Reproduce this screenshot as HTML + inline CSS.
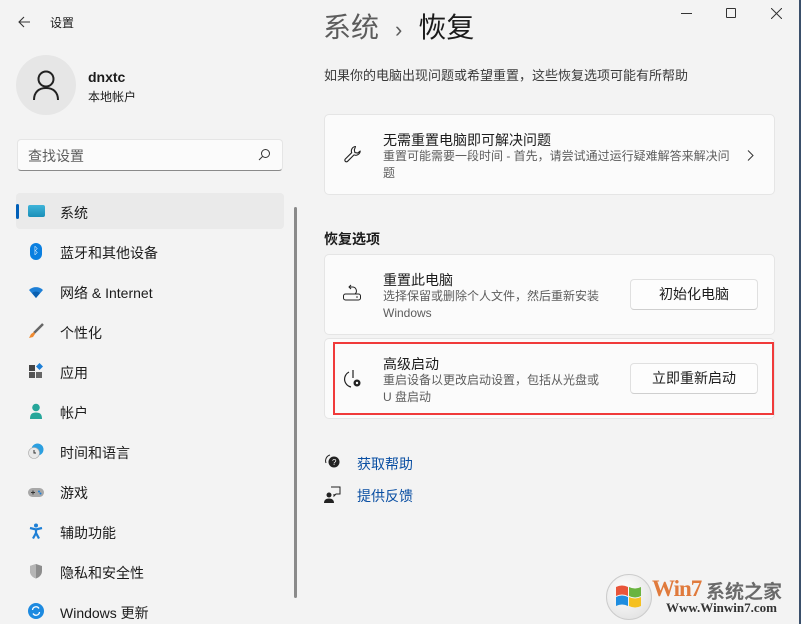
<!DOCTYPE html>
<html><head><meta charset="utf-8">
<style>
*{margin:0;padding:0;box-sizing:border-box}
body{width:801px;height:624px;overflow:hidden;background:#f3f3f3;font-family:"Liberation Sans","Noto Sans CJK SC",sans-serif;color:#1b1b1b;position:relative}
.a{position:absolute;white-space:nowrap}
.card{position:absolute;left:324px;width:451px;background:#fbfbfb;border:1px solid #e5e5e5;border-radius:5px}
.btn{position:absolute;left:630px;width:128px;height:31px;background:#fdfdfd;border:1px solid #e0e0e0;border-bottom-color:#cfcfcf;border-radius:4px;font-size:14px;text-align:center;line-height:29px}
.nav{position:absolute;left:60px;font-size:14px}
.ico{position:absolute;left:28px;width:16px;height:16px}
.t14{font-size:14px}
.t12{font-size:12px;color:#5d5d5d;line-height:17px}
</style></head><body>
<svg class="a" style="left:17px;top:15px" width="14" height="14" viewBox="0 0 14 14"><path d="M13 7H2M7 2L2 7l5 5" stroke="#333" stroke-width="1.1" fill="none"/></svg>
<div class="a" style="left:50px;top:14px;font-size:12px">设置</div>
<div class="a" style="left:16px;top:55px;width:60px;height:60px;border-radius:50%;background:#e6e6e6"></div>
<svg class="a" style="left:32px;top:69px" width="28" height="32" viewBox="0 0 28 32"><circle cx="14" cy="10" r="7.5" stroke="#222" stroke-width="2" fill="none"/><path d="M2 31c0-8 5-12 12-12s12 4 12 12" stroke="#222" stroke-width="2" fill="none"/></svg>
<div class="a" style="left:88px;top:69px;font-size:14px;font-weight:bold">dnxtc</div>
<div class="a" style="left:88px;top:88px;font-size:12px">本地帐户</div>
<div class="a" style="left:17px;top:139px;width:266px;height:32px;background:#fbfbfb;border:1px solid #e5e5e5;border-bottom:1px solid #8a8a8a;border-radius:4px"></div>
<div class="a" style="left:28px;top:146px;font-size:14px;color:#5d5d5d">查找设置</div>
<svg class="a" style="left:258px;top:148px" width="13" height="13" viewBox="0 0 13 13"><circle cx="7.5" cy="5.5" r="4" stroke="#333" fill="none"/><path d="M4.5 8.5L1 12" stroke="#333"/></svg>
<div class="a" style="left:16px;top:193px;width:268px;height:36px;background:#eaeaea;border-radius:4px"></div>
<div class="a" style="left:16px;top:204px;width:3px;height:15px;background:#005fb8;border-radius:2px"></div>
<div class="ico" style="top:205px;height:12px;background:linear-gradient(#3fb4d9,#1a8fb8);border-radius:2px;width:17px"></div>
<div class="nav" style="top:203px">系统</div>
<div class="ico" style="top:243px;left:30px;width:12px;height:17px;background:#0a7fe0;border-radius:6px;color:#fff;font-size:10px;text-align:center;line-height:17px">ᛒ</div>
<div class="nav" style="top:243px">蓝牙和其他设备</div>
<svg class="ico" style="top:285px" viewBox="0 0 16 16"><path d="M1 5a10 10 0 0 1 14 0L8 13z" fill="#1d7fd6"/><path d="M4 8a6 6 0 0 1 8 0L8 13z" fill="#0a5fb0"/></svg>
<div class="nav" style="top:283px">网络 &amp; Internet</div>
<svg class="ico" style="top:323px" viewBox="0 0 16 16"><path d="M15 1L6 10" stroke="#666" stroke-width="2.5"/><path d="M6 9l-3 2-2 4 4-1 2-3z" fill="#f08a30"/></svg>
<div class="nav" style="top:323px">个性化</div>
<svg class="ico" style="top:363px" viewBox="0 0 16 16"><rect x="1" y="2" width="6" height="6" fill="#444"/><rect x="1" y="9" width="6" height="6" fill="#555"/><rect x="8" y="9" width="6" height="6" fill="#666"/><path d="M11.5 0l3.5 3.5-3.5 3.5-3.5-3.5z" fill="#1d7fd6"/></svg>
<div class="nav" style="top:363px">应用</div>
<svg class="ico" style="top:403px" viewBox="0 0 16 16"><circle cx="8" cy="4.5" r="3.8" fill="#26a69a"/><path d="M2 16c0-5 2-6.5 6-6.5s6 1.5 6 6.5z" fill="#26a69a"/></svg>
<div class="nav" style="top:403px">帐户</div>
<svg class="ico" style="top:443px" viewBox="0 0 16 16"><circle cx="9.5" cy="6.5" r="6" fill="#2b9fe0"/><circle cx="6" cy="10" r="5.5" fill="#e8e8e8" stroke="#aaa" stroke-width=".6"/><path d="M6 7v3h2" stroke="#333" fill="none"/></svg>
<div class="nav" style="top:443px">时间和语言</div>
<svg class="ico" style="top:485px" viewBox="0 0 16 12"><rect x="0" y="1" width="16" height="9" rx="4.5" fill="#a8a8a8"/><path d="M3 5.5h4M5 3.5v4" stroke="#333"/><circle cx="11" cy="4.5" r="1" fill="#1d7fd6"/><circle cx="12.5" cy="6.5" r="1" fill="#1d7fd6"/></svg>
<div class="nav" style="top:483px">游戏</div>
<svg class="ico" style="top:523px" viewBox="0 0 16 16"><circle cx="8" cy="2.5" r="2" fill="#1d7fd6"/><path d="M2 5l6 1.5L14 5M8 6v4l-3 5.5M8 10l3 5.5" stroke="#1d7fd6" stroke-width="2.2" fill="none"/></svg>
<div class="nav" style="top:523px">辅助功能</div>
<svg class="ico" style="top:563px" viewBox="0 0 16 16"><path d="M8 1l6 2v5c0 4-3 6.5-6 7.5C5 14.5 2 12 2 8V3z" fill="#8d8d8d"/><path d="M8 1v14.5C5 14.5 2 12 2 8V3z" fill="#b5b5b5"/></svg>
<div class="nav" style="top:563px">隐私和安全性</div>
<svg class="ico" style="top:603px" viewBox="0 0 16 16"><circle cx="8" cy="8" r="8" fill="#1d8ae0"/><path d="M4.5 7a3.5 3.5 0 0 1 6.5-1.5M11.5 9a3.5 3.5 0 0 1-6.5 1.5" stroke="#fff" stroke-width="1.3" fill="none"/></svg>
<div class="nav" style="top:603px">Windows 更新</div>
<div class="a" style="left:294px;top:207px;width:3px;height:391px;background:#8a8a8a;border-radius:2px"></div>

<div class="a" style="left:681px;top:13px;width:11px;height:1px;background:#333"></div>
<div class="a" style="left:726px;top:8px;width:10px;height:10px;border:1px solid #333;border-radius:1px"></div>
<svg class="a" style="left:771px;top:8px" width="11" height="11" viewBox="0 0 11 11"><path d="M0 0l11 11M11 0L0 11" stroke="#333"/></svg>
<div class="a" style="left:799px;top:0;width:2px;height:624px;background:#3a4f6a"></div>

<div class="a" style="left:323px;top:8px;font-size:28px;line-height:40px"><span style="color:#5c5c5c">系统</span><span style="color:#5c5c5c;font-size:22px;margin:0 16px 0 16px">›</span><span>恢复</span></div>
<div class="a" style="left:324px;top:65px;font-size:13px;color:#3a3a3a">如果你的电脑出现问题或希望重置，这些恢复选项可能有所帮助</div>

<div class="card" style="top:114px;height:81px"></div>
<svg class="a" style="left:343px;top:144px" width="20" height="20" viewBox="0 0 20 20"><path d="M12.5 2.5a4.5 4.5 0 0 0-3.8 6.2L2.3 15a1.6 1.6 0 0 0 2.3 2.3l6.4-6.4a4.5 4.5 0 0 0 6.2-3.8l-2.5 2-2.8-.5-.6-2.7z" stroke="#222" stroke-width="1.1" fill="none" stroke-linejoin="round"/></svg>
<div class="a t14" style="left:383px;top:130px">无需重置电脑即可解决问题</div>
<div class="a t12" style="left:383px;top:148px">重置可能需要一段时间 - 首先，请尝试通过运行疑难解答来解决问<br>题</div>
<svg class="a" style="left:747px;top:150px" width="7" height="11" viewBox="0 0 7 11"><path d="M1 .5l5 5-5 5" stroke="#333" fill="none"/></svg>

<div class="a" style="left:324px;top:229px;font-size:14px;font-weight:bold">恢复选项</div>

<div class="card" style="top:254px;height:81px"></div>
<svg class="a" style="left:342px;top:283px" width="20" height="20" viewBox="0 0 20 20"><path d="M9 2l-2 2 2 2M7 4h4a4 4 0 0 1 2 7" stroke="#222" fill="none"/><rect x="1.5" y="11" width="17" height="6" rx="2" stroke="#222" fill="none"/><circle cx="15" cy="14" r=".8" fill="#222"/></svg>
<div class="a t14" style="left:383px;top:270px">重置此电脑</div>
<div class="a t12" style="left:383px;top:288px">选择保留或删除个人文件，然后重新安装<br>Windows</div>
<div class="btn" style="top:279px">初始化电脑</div>

<div class="card" style="top:338px;height:81px"></div>
<div class="a" style="left:333px;top:342px;width:441px;height:73px;border:2px solid #f03a3a"></div>
<svg class="a" style="left:342px;top:368px" width="22" height="22" viewBox="0 0 22 22"><path d="M7 4a8 8 0 0 0 2 15M11 2v8" stroke="#222" stroke-width="1.2" fill="none"/><circle cx="15" cy="15" r="3.5" fill="#222"/><circle cx="15" cy="15" r="1.2" fill="#fbfbfb"/></svg>
<div class="a t14" style="left:383px;top:354px">高级启动</div>
<div class="a t12" style="left:383px;top:372px">重启设备以更改启动设置，包括从光盘或<br>U 盘启动</div>
<div class="btn" style="top:363px">立即重新启动</div>

<svg class="a" style="left:324px;top:453px" width="17" height="17" viewBox="0 0 17 17"><path d="M6 2a6 6 0 0 0-4 8" stroke="#222" fill="none"/><circle cx="10" cy="9" r="5.5" fill="#222"/><text x="8" y="12" font-size="8" fill="#fff" font-family="Liberation Sans">?</text></svg>
<div class="a" style="left:357px;top:454px;font-size:14px;color:#0a4fa3">获取帮助</div>
<svg class="a" style="left:324px;top:486px" width="17" height="17" viewBox="0 0 17 17"><circle cx="5" cy="9" r="2.5" fill="#222"/><path d="M0 17c0-3 2-4.5 5-4.5s5 1.5 5 4.5z" fill="#222"/><path d="M7 1h9v7h-4l-2 2V8" stroke="#222" fill="none"/></svg>
<div class="a" style="left:357px;top:486px;font-size:14px;color:#0a4fa3">提供反馈</div>

<div class="a" style="left:606px;top:574px;width:46px;height:46px;border-radius:50%;background:radial-gradient(circle at 40% 35%,#fff,#dcdcdc);border:1px solid #ccc"></div>
<svg class="a" style="left:614px;top:582px" width="30" height="30" viewBox="0 0 30 30"><path d="M2 5q6-3 12 0v9q-6-3-12 0z" fill="#e8553a"/><path d="M15 5q6 3 12 0v9q-6 3-12 0z" fill="#6ab440"/><path d="M2 15q6-3 12 0v9q-6-3-12 0z" fill="#1e8de0"/><path d="M15 15q6 3 12 0v9q-6 3-12 0z" fill="#f5c020"/></svg>
<div class="a" style="left:652px;top:576px;font-family:'Liberation Serif',serif;font-weight:bold;font-size:23px;color:#e07a3c;letter-spacing:-1px">Win7</div>
<div class="a" style="left:706px;top:577px;font-size:19px;font-weight:bold;color:#6a6a6a">系统之家</div>
<div class="a" style="left:666px;top:600px;font-family:'Liberation Serif',serif;font-weight:bold;font-size:13px;color:#333">Www.Winwin7.com</div>
</body></html>
